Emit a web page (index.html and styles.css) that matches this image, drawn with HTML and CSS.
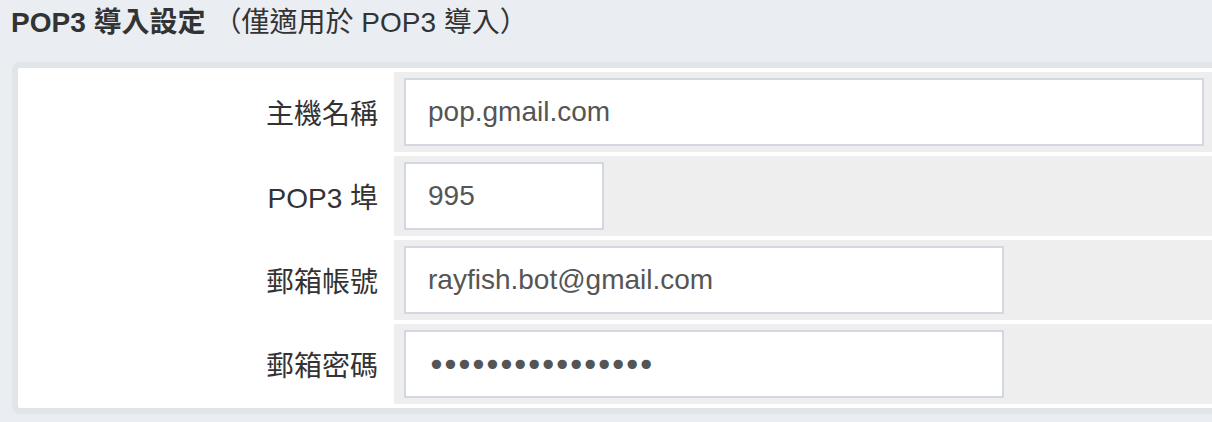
FILE: index.html
```html
<!DOCTYPE html>
<html lang="zh-Hant">
<head>
<meta charset="utf-8">
<title>POP3 導入設定</title>
<link rel="stylesheet" href="styles.css">
</head>
<body>
<h2 class="section-title"><strong>POP3 導入設定</strong><span class="section-note">（僅適用於 POP3 導入）</span></h2>
<form class="card">
  <label class="field-label" for="host">主機名稱</label>
  <div class="field-cell"><input id="host" class="field-input w-xl" type="text" value="pop.gmail.com"></div>
  <label class="field-label" for="port">POP3 埠</label>
  <div class="field-cell"><input id="port" class="field-input w-sm" type="text" value="995"></div>
  <label class="field-label" for="account">郵箱帳號</label>
  <div class="field-cell"><input id="account" class="field-input w-lg" type="text" value="rayfish.bot@gmail.com"></div>
  <label class="field-label" for="password">郵箱密碼</label>
  <div class="field-cell"><input id="password" class="field-input w-lg password" type="password" value="abcdefghijklmnop"></div>
</form>
</body>
</html>
```
FILE: styles.css
```css
html, body {
  margin: 0;
  padding: 0;
}
body {
  background: #eaeef2;
  overflow: hidden;
  font-family: "Liberation Sans", "Noto Sans CJK TC", sans-serif;
  color: #333;
}
.section-title {
  margin: 0;
  height: 62px;
  padding-left: 11px;
  font-size: 28px;
  line-height: 46px;
  font-weight: normal;
  color: #333;
}
.section-title strong {
  font-weight: bold;
}
.section-note {
  margin-left: 8px;
}
.card {
  display: grid;
  grid-template-columns: 368px 1fr;
  grid-auto-rows: 80px;
  gap: 4px;
  padding: 4px;
  margin: 0 -40px 8px 12px;
  border: 6px solid #e1e5e8;
  border-radius: 8px;
  background: #fff;
}
.field-label {
  display: flex;
  align-items: center;
  justify-content: flex-end;
  padding-right: 12px;
  font-size: 28px;
  color: #333;
}
.field-cell {
  display: flex;
  align-items: center;
  padding: 0 10px;
  background: #eeeeee;
}
.field-input {
  box-sizing: border-box;
  height: 68px;
  margin: 0;
  padding: 0 22px;
  border: 2px solid #d3d7df;
  border-radius: 0;
  background: #fff;
  font-family: "Liberation Sans", "Noto Sans CJK TC", sans-serif;
  font-size: 28px;
  color: #555;
  outline: none;
}
.w-xl { width: 800px; }
.w-lg { width: 600px; }
.w-sm { width: 200px; }
.password {
  font-family: "DejaVu Sans", sans-serif;
  font-size: 32px;
  padding-left: 21px;
  padding-top: 2px;
  letter-spacing: -4.9px;
}
```
